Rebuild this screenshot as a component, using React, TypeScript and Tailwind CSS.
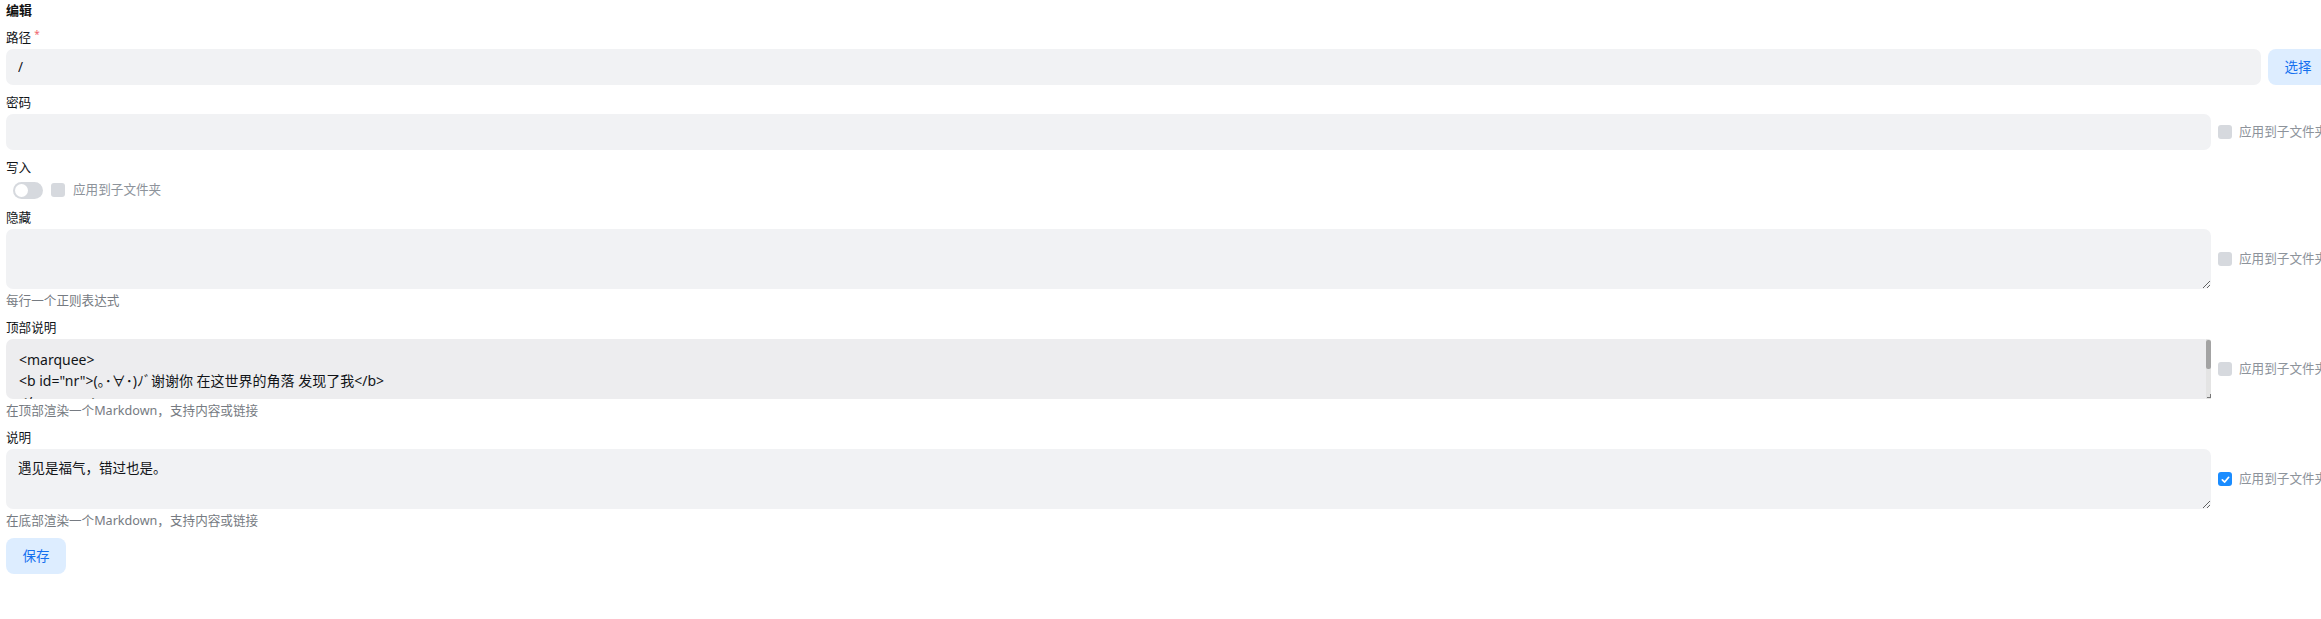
import React from "react";

function Check({ checked }: { checked?: boolean }) {
  return checked ? (
    <span className="flex h-[14px] w-[14px] shrink-0 items-center justify-center rounded-[3px] bg-[#1a8cff]">
      <svg viewBox="0 0 14 14" className="h-[11px] w-[11px]">
        <path d="M3 7.4 L6 10.2 L11 4.2" fill="none" stroke="white" strokeWidth="2.2" strokeLinecap="round" strokeLinejoin="round" />
      </svg>
    </span>
  ) : (
    <span className="block h-[14px] w-[14px] shrink-0 rounded-[3px] bg-[#d6d9de]" />
  );
}

function Apply({ checked }: { checked?: boolean }) {
  return (
    <div className="flex w-[110px] shrink-0 items-center gap-[7px]">
      <Check checked={checked} />
      <span className="whitespace-nowrap text-[12.6px] leading-[20px] text-[#8d939b]">应用到子文件夹</span>
    </div>
  );
}

function Label({ children }: { children: React.ReactNode }) {
  return <div className="mb-[1px] h-[20px] text-[12.6px] leading-[20px] text-[#111418]">{children}</div>;
}

function Helper({ children }: { children: React.ReactNode }) {
  return <div className="mt-[2px] h-[20px] whitespace-nowrap text-[12.6px] leading-[20px] text-[#767b82]">{children}</div>;
}

const inputCls =
  "h-[36px] min-w-0 flex-1 rounded-[7px] bg-[#f1f2f4] px-[12px] text-[13.5px] text-[#111418] outline-none";
const taCls =
  "block h-[60px] min-w-0 flex-1 rounded-[7px] bg-[#f1f2f4] px-[12px] pt-[9px] text-[13.5px] leading-[21px] text-[#111418] outline-none";

export default function App() {
  const marquee = `<marquee>\n<b id="nr">(｡･∀･)ﾉﾞ谢谢你 在这世界的角落 发现了我</b>\n</marquee>\n\n\n`;
  return (
    <div className="h-[619px] w-[2321px] overflow-hidden bg-white font-['Noto_Sans','Noto_Sans_CJK_SC',sans-serif]">
      <div className="w-[2328px] pl-[6px]">
        <div className="mb-[8px] h-[20px] text-[13px] font-bold leading-[20px] text-[#111]">编辑</div>

        <div className="mb-[8px]">
          <Label>
            路径<span className="relative -top-[4px] ml-[3px] text-[10px] text-[#f0646e]">*</span>
          </Label>
          <div className="flex items-center gap-[7px]">
            <input className={inputCls} defaultValue="/" />
            <button className="h-[36px] w-[60px] shrink-0 rounded-[8px] bg-[#ddedff] text-[13.5px] text-[#1570ef]">选择</button>
          </div>
        </div>

        <div className="mb-[8px]">
          <Label>密码</Label>
          <div className="flex items-center gap-[7px]">
            <input className={inputCls} defaultValue="" />
            <Apply />
          </div>
        </div>

        <div className="mb-[7px]">
          <Label>写入</Label>
          <div className="flex h-[22px] items-center">
            <span className="ml-[7px] flex h-[17px] w-[30px] items-center rounded-full bg-[#d6d9de] px-[2px]">
              <span className="h-[13px] w-[13px] rounded-full bg-white" />
            </span>
            <span className="ml-[8px] flex">
              <Check />
            </span>
            <span className="ml-[8px] whitespace-nowrap text-[12.6px] text-[#8d939b]">应用到子文件夹</span>
          </div>
        </div>

        <div className="mb-[7px]">
          <Label>隐藏</Label>
          <div className="flex items-center gap-[7px]">
            <textarea className={taCls} defaultValue="" />
            <Apply />
          </div>
          <Helper>每行一个正则表达式</Helper>
        </div>

        <div className="mb-[7px]">
          <Label>顶部说明</Label>
          <div className="flex items-center gap-[7px]">
            <div className="relative min-w-0 flex-1">
              <textarea
                className="block h-[60px] w-full resize-none overflow-hidden rounded-[7px] bg-[#ededef] pl-[13px] pr-[8px] pt-[10px] text-[14px] leading-[21px] text-[#111418] outline-none"
                defaultValue={marquee}
              />
              <div className="pointer-events-none absolute right-0 top-0 flex h-[60px] w-[5px] flex-col rounded-tr-[3px] bg-[#e4e4e4]">
                <div className="mt-[1px] h-[29px] w-[5px] rounded-[2px] bg-[#a3a3a3]" />
                <div className="mt-auto mb-[1px] h-[4px] w-[4px] self-end border-b border-r border-[#777]" />
              </div>
            </div>
            <Apply />
          </div>
          <Helper>在顶部渲染一个Markdown，支持内容或链接</Helper>
        </div>

        <div className="mb-[7px]">
          <Label>说明</Label>
          <div className="flex items-center gap-[7px]">
            <textarea className={taCls} defaultValue="遇见是福气，错过也是。" />
            <Apply checked />
          </div>
          <Helper>在底部渲染一个Markdown，支持内容或链接</Helper>
        </div>

        <button className="h-[36px] w-[60px] rounded-[8px] bg-[#ddedff] text-[13.5px] text-[#1570ef]">保存</button>
      </div>
    </div>
  );
}
